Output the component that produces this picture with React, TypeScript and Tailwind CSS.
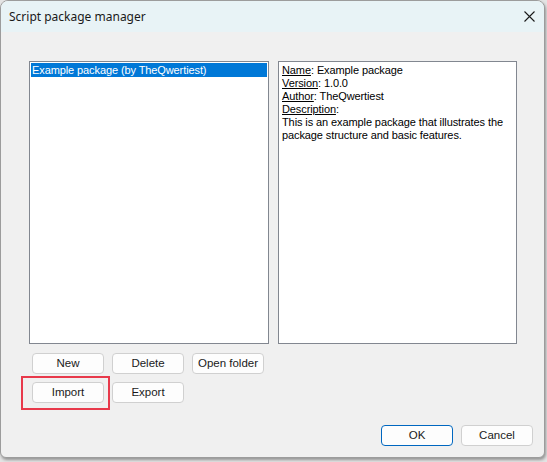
import React from "react";

const ui = { fontFamily: '"Liberation Sans", Arial, sans-serif' };
const title = { fontFamily: '"Noto Sans", "Open Sans", sans-serif' };

function Btn({ label, primary = false }: { label: string; primary?: boolean }) {
  return (
    <button
      className={
        "w-[72px] h-[21px] rounded-[4px] bg-[#fdfdfd] text-[11.5px] leading-none text-[#1a1a1a] flex items-center justify-center " +
        (primary ? "border border-[#0067c0]" : "border border-[#d0d0d0]")
      }
      style={ui}
    >
      {label}
    </button>
  );
}

function Field({ name, value }: { name: string; value: string }) {
  return (
    <div>
      <span className="underline underline-offset-[1px]">{name}</span>: {value}
    </div>
  );
}

export default function App() {
  return (
    <div className="w-[547px] h-[462px] bg-[#e4e4e4] overflow-hidden">
      <div className="w-[545px] h-[458px] rounded-t-[8px] rounded-b-[6px] border border-[#9c9c9c] bg-[#f0f0f0] overflow-hidden flex flex-col shadow-[1px_2px_3px_rgba(0,0,0,0.35)]">
        {/* title bar */}
        <div className="h-[31px] bg-[#e8f3f6] flex items-center justify-between pl-[8px] pr-[8px] shrink-0">
          <span className="text-[12px] text-[#1a1a1a]" style={title}>
            Script package manager
          </span>
          <svg width="11" height="11" viewBox="0 0 11 11" className="mr-[1px]">
            <path d="M0.5 0.5 L10.5 10.5 M10.5 0.5 L0.5 10.5" stroke="#1a1a1a" strokeWidth="1.1" />
          </svg>
        </div>

        {/* body */}
        <div className="flex-1 flex flex-col pl-[28px] pt-[29px] text-[11px] text-black tracking-[-0.1px]" style={ui}>
          <div className="flex gap-[9px]">
            <div className="w-[240px] h-[283px] bg-white border border-[#828790] p-[1px]">
              <div className="h-[14px] bg-[#0078d7] text-white leading-[14px] pl-[1px]">
                Example package (by TheQwertiest)
              </div>
            </div>
            <div className="w-[239px] h-[283px] bg-white border border-[#828790] pl-[3px] pt-[2px] leading-[13px]">
              <Field name="Name" value="Example package" />
              <Field name="Version" value="1.0.0" />
              <Field name="Author" value="TheQwertiest" />
              <div>
                <span className="underline underline-offset-[1px]">Description</span>:
              </div>
              <div>This is an example package that illustrates the package structure and basic features.</div>
            </div>
          </div>

          <div className="flex flex-col gap-[8px] pl-[3px] mt-[9px] tracking-normal">
            <div className="flex gap-[8px]">
              <Btn label="New" />
              <Btn label="Delete" />
              <Btn label="Open folder" />
            </div>
            <div className="flex gap-[8px]">
              <div className="relative">
                <Btn label="Import" />
                <div className="absolute left-[-11px] top-[-6px] w-[89px] h-[34px] border-2 border-[#e8394b]" />
              </div>
              <Btn label="Export" />
            </div>
          </div>

          <div className="flex justify-end gap-[8px] pr-[11px] mt-[22px] tracking-normal">
            <Btn label="OK" primary />
            <Btn label="Cancel" />
          </div>
        </div>
      </div>
    </div>
  );
}
